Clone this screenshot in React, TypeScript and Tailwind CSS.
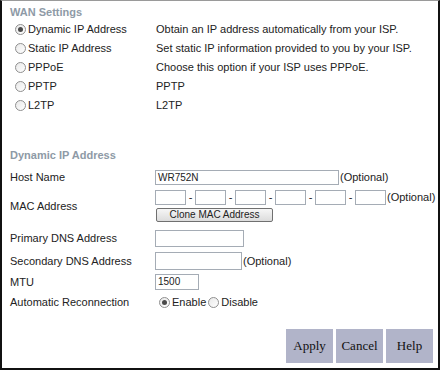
const font = { fontFamily: '"Liberation Sans", Arial, sans-serif' };

const Radio = ({ checked }: { checked?: boolean }) => (
  <span className="inline-flex items-center justify-center w-[11px] h-[11px] rounded-full border border-[#8f8f8f] bg-gradient-to-br from-[#e8e8e8] to-white mr-[2px] shrink-0">
    {checked && <span className="block w-[5px] h-[5px] rounded-full bg-[#4a4a4a]" />}
  </span>
);

const Box = ({ w, h = 15, value }: { w: number; h?: number; value?: string }) => (
  <div
    className="border border-[#a5acb5] bg-white text-[10px] leading-none flex items-center pl-[2px] text-[#222]"
    style={{ width: w, height: h }}
  >
    {value}
  </div>
);

const wanModes = [
  { name: "Dynamic IP Address", desc: "Obtain an IP address automatically from your ISP.", checked: true },
  { name: "Static IP Address", desc: "Set static IP information provided to you by your ISP." },
  { name: "PPPoE", desc: "Choose this option if your ISP uses PPPoE." },
  { name: "PPTP", desc: "PPTP" },
  { name: "L2TP", desc: "L2TP" },
];

export default function App() {
  return (
    <div
      className="w-[440px] h-[370px] bg-white border-2 border-t border-[#111] border-t-[#9a9a9a] text-[11px] text-[#222] overflow-hidden"
      style={font}
    >
      <div className="pl-[8px] pt-[4px]">
        <div className="h-[15px] flex items-center font-bold text-[#8e9aa6]">WAN Settings</div>
        {wanModes.map((m) => (
          <div key={m.name} className="h-[19px] flex items-center">
            <div className="w-[146px] flex items-center pl-[5px]">
              <Radio checked={m.checked} />
              <span>{m.name}</span>
            </div>
            <span>{m.desc}</span>
          </div>
        ))}

        <div className="h-[15px] mt-[33px] flex items-center font-bold text-[#8e9aa6]">Dynamic IP Address</div>

        <div className="mt-[7px] h-[15px] flex items-center">
          <div className="w-[145px]">Host Name</div>
          <Box w={184} value="WR752N" />
          <span className="ml-[1px]">(Optional)</span>
        </div>

        <div className="mt-[5px] flex items-center">
          <div className="w-[145px]">MAC Address</div>
          <div className="flex flex-col">
            <div className="flex items-center h-[15px]">
              {[0, 1, 2, 3, 4, 5].map((i) => (
                <div key={i} className="flex items-center">
                  {i > 0 && <span className="w-[9px] text-center">-</span>}
                  <Box w={31} />
                </div>
              ))}
              <span className="ml-[1px]">(Optional)</span>
            </div>
            <button className="mt-[3px] ml-[1px] w-[117px] h-[14px] rounded-[2px] border border-[#707070] bg-gradient-to-b from-[#f6f6f6] to-[#dcdcdc] text-[10px] leading-none text-[#222]">
              Clone MAC Address
            </button>
          </div>
        </div>

        <div className="mt-[8px] h-[17px] flex items-center">
          <div className="w-[145px]">Primary DNS Address</div>
          <Box w={89} h={17} />
        </div>

        <div className="mt-[5px] h-[18px] flex items-center">
          <div className="w-[145px]">Secondary DNS Address</div>
          <Box w={87} h={18} />
          <span className="ml-[1px]">(Optional)</span>
        </div>

        <div className="mt-[4px] h-[16px] flex items-center">
          <div className="w-[145px]">MTU</div>
          <Box w={44} h={16} value="1500" />
        </div>

        <div className="mt-[4px] h-[17px] flex items-center">
          <div className="w-[149px]">Automatic Reconnection</div>
          <Radio checked />
          <span>Enable</span>
          <span className="ml-[2px]" />
          <Radio />
          <span>Disable</span>
        </div>
      </div>

      <div className="flex justify-end gap-[3px] pr-[5px] mt-[18px]">
        {["Apply", "Cancel", "Help"].map((b) => (
          <button
            key={b}
            className="w-[47px] h-[34px] bg-[#b1b4c9] text-[13px] text-[#111]"
            style={{ fontFamily: '"Liberation Serif", "Times New Roman", serif' }}
          >
            {b}
          </button>
        ))}
      </div>
    </div>
  );
}
